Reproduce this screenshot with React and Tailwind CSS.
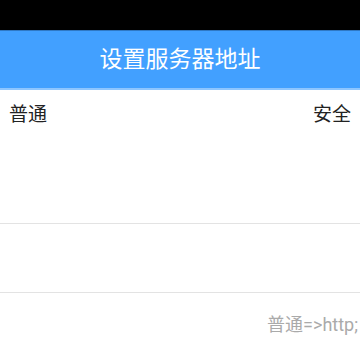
export default function App() {
  const font = { fontFamily: 'Roboto, "Noto Sans CJK SC", sans-serif' };

  return (
    <div className="w-[360px] h-[360px] bg-white overflow-hidden flex flex-col" style={font}>
      <div className="h-[30px] bg-black shrink-0" />
      <div className="h-[60px] shrink-0 bg-[#42a0ff] border-t border-[#2f78c4] border-b-2 border-b-[#8ec6ff] flex items-center justify-center">
        <span className="text-white text-[23px] leading-none">设置服务器地址</span>
      </div>

      <div className="h-[50px] shrink-0 flex items-center justify-between px-[9px] text-[19px] text-[#222]">
        <span>普通</span>
        <span>安全</span>
      </div>

      <div className="h-[84px] shrink-0 border-b border-[#e3e3e3]" />
      <div className="h-[69px] shrink-0 border-b border-[#e3e3e3]" />

      <div className="pt-[23px] pr-[2px] flex justify-end whitespace-nowrap text-[18px] leading-none text-[#aaaaaa]">
        普通=&gt;http;
      </div>
    </div>
  );
}
